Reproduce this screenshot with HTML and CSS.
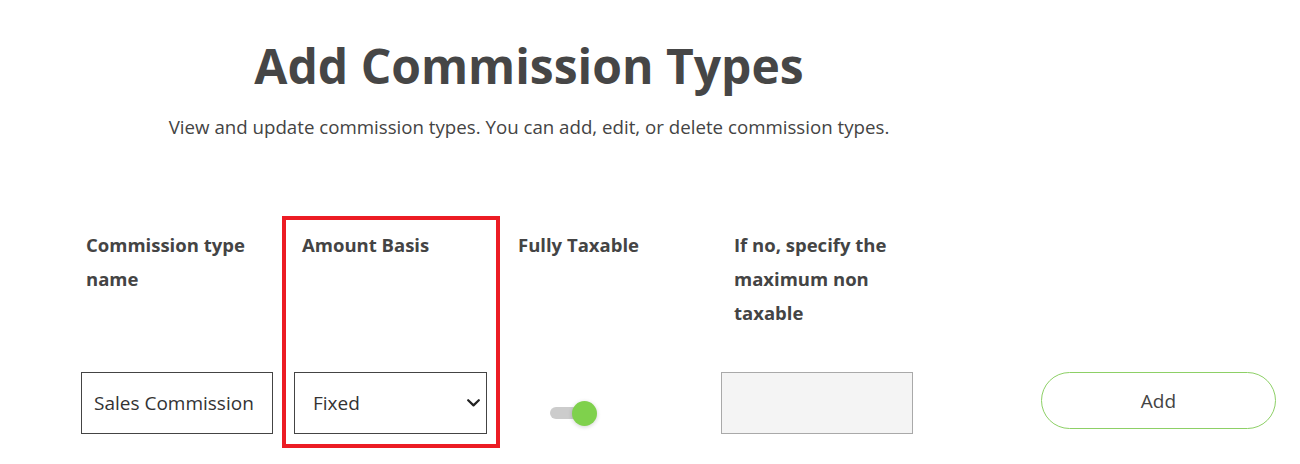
FILE: index.html
```html
<!DOCTYPE html>
<html lang="en">
<head>
<meta charset="utf-8">
<title>Add Commission Types</title>
<link rel="stylesheet" href="styles.css">
</head>
<body>
<header class="page-header">
  <h1 class="title">Add Commission Types</h1>
  <p class="subtitle">View and update commission types. You can add, edit, or delete commission types.</p>
</header>
<form class="form-row">
  <div class="field field-name">
    <label class="field-label" for="ctname">Commission type name</label>
    <input id="ctname" class="text-input" type="text" value="Sales Commission">
  </div>
  <div class="field field-basis">
    <label class="field-label" for="basis">Amount Basis</label>
    <div class="select-wrap">
      <select id="basis" class="select-input">
        <option>Fixed</option>
        <option>Percentage</option>
      </select>
      <svg class="chevron" width="13" height="8" viewBox="0 0 13 8"><path d="M1.2 1.2 L6.5 6.4 L11.8 1.2" fill="none" stroke="#222" stroke-width="2.2" stroke-linecap="round" stroke-linejoin="round"/></svg>
    </div>
  </div>
  <div class="field field-taxable">
    <span class="field-label">Fully Taxable</span>
    <div class="toggle">
      <span class="toggle-track"></span>
      <span class="toggle-knob"></span>
    </div>
  </div>
  <div class="field field-max">
    <label class="field-label" for="maxnt">If no, specify the maximum non taxable</label>
    <input id="maxnt" class="text-input disabled-input" type="text" disabled>
  </div>
  <div class="field field-action">
    <button type="button" class="add-btn">Add</button>
  </div>
</form>
</body>
</html>
```

FILE: styles.css
```css
html, body {
  margin: 0;
  padding: 0;
  background: #fff;
}
body {
  min-height: 464px;
  font-family: "Open Sans", "Noto Sans", sans-serif;
  color: #444;
}
.page-header {
  width: 1058px;
  text-align: center;
  padding-top: 36px;
}
.title {
  margin: 0;
  font-size: 48px;
  line-height: 60px;
  font-weight: 700;
  color: #464646;
}
.subtitle {
  margin: 19px 0 0;
  font-size: 18.7px;
  line-height: 24px;
  color: #444;
}
.form-row {
  display: grid;
  grid-template-columns: 216px 216px 216px 216px 340px;
  padding-left: 78px;
  padding-bottom: 30px;
  margin-top: 89px;
}
.field {
  display: flex;
  flex-direction: column;
  align-items: flex-start;
}
.field-label {
  display: block;
  box-sizing: border-box;
  height: 144px;
  width: 192px;
  padding-left: 8px;
  font-size: 18.5px;
  line-height: 34px;
  font-weight: 700;
  color: #444;
}
.field-max .field-label {
  width: 185px;
}
.text-input {
  box-sizing: border-box;
  height: 62px;
  width: 192px;
  margin: 0;
  padding: 0 0 0 12px;
  border: 1px solid #444;
  border-radius: 0;
  background: #fff;
  font-family: "Open Sans", "Noto Sans", sans-serif;
  font-size: 19px;
  color: #333;
  outline: none;
}
.field-name .text-input {
  margin-left: 3px;
}
.field-basis {
  position: relative;
}
.field-basis::before {
  content: "";
  position: absolute;
  left: -12px;
  top: -12px;
  width: 218px;
  height: 232px;
  box-sizing: border-box;
  border: 4px solid #ec1c24;
  pointer-events: none;
}
.select-wrap {
  position: relative;
  width: 193px;
  height: 62px;
}
.select-input {
  box-sizing: border-box;
  width: 193px;
  height: 62px;
  margin: 0;
  padding: 0 0 0 18px;
  border: 1px solid #444;
  border-radius: 0;
  background: #fff;
  -webkit-appearance: none;
  appearance: none;
  font-family: "Open Sans", "Noto Sans", sans-serif;
  font-size: 19px;
  color: #333;
  outline: none;
}
.chevron {
  position: absolute;
  left: 173px;
  top: 27px;
  pointer-events: none;
}
.toggle {
  position: relative;
  margin-left: 40px;
  margin-top: 29px;
  width: 47px;
  height: 25px;
}
.toggle-track {
  position: absolute;
  left: 0;
  top: 6px;
  width: 40px;
  height: 12px;
  border-radius: 6px;
  background: #cccccc;
}
.toggle-knob {
  position: absolute;
  left: 22px;
  top: 0;
  width: 25px;
  height: 25px;
  border-radius: 50%;
  background: #7fd14c;
  box-shadow: 0 1px 4px rgba(0, 0, 0, 0.18);
}
.field-max .disabled-input {
  margin-left: -5px;
  background: #f4f4f4;
  border-color: #a9a9a9;
}
.field-action {
  padding-top: 144px;
}
.add-btn {
  margin-left: 99px;
  box-sizing: border-box;
  width: 235px;
  height: 57px;
  border: 1px solid #8dd066;
  border-radius: 29px;
  background: #fff;
  font-family: "Open Sans", "Noto Sans", sans-serif;
  font-size: 19px;
  color: #444;
  cursor: pointer;
}
```
